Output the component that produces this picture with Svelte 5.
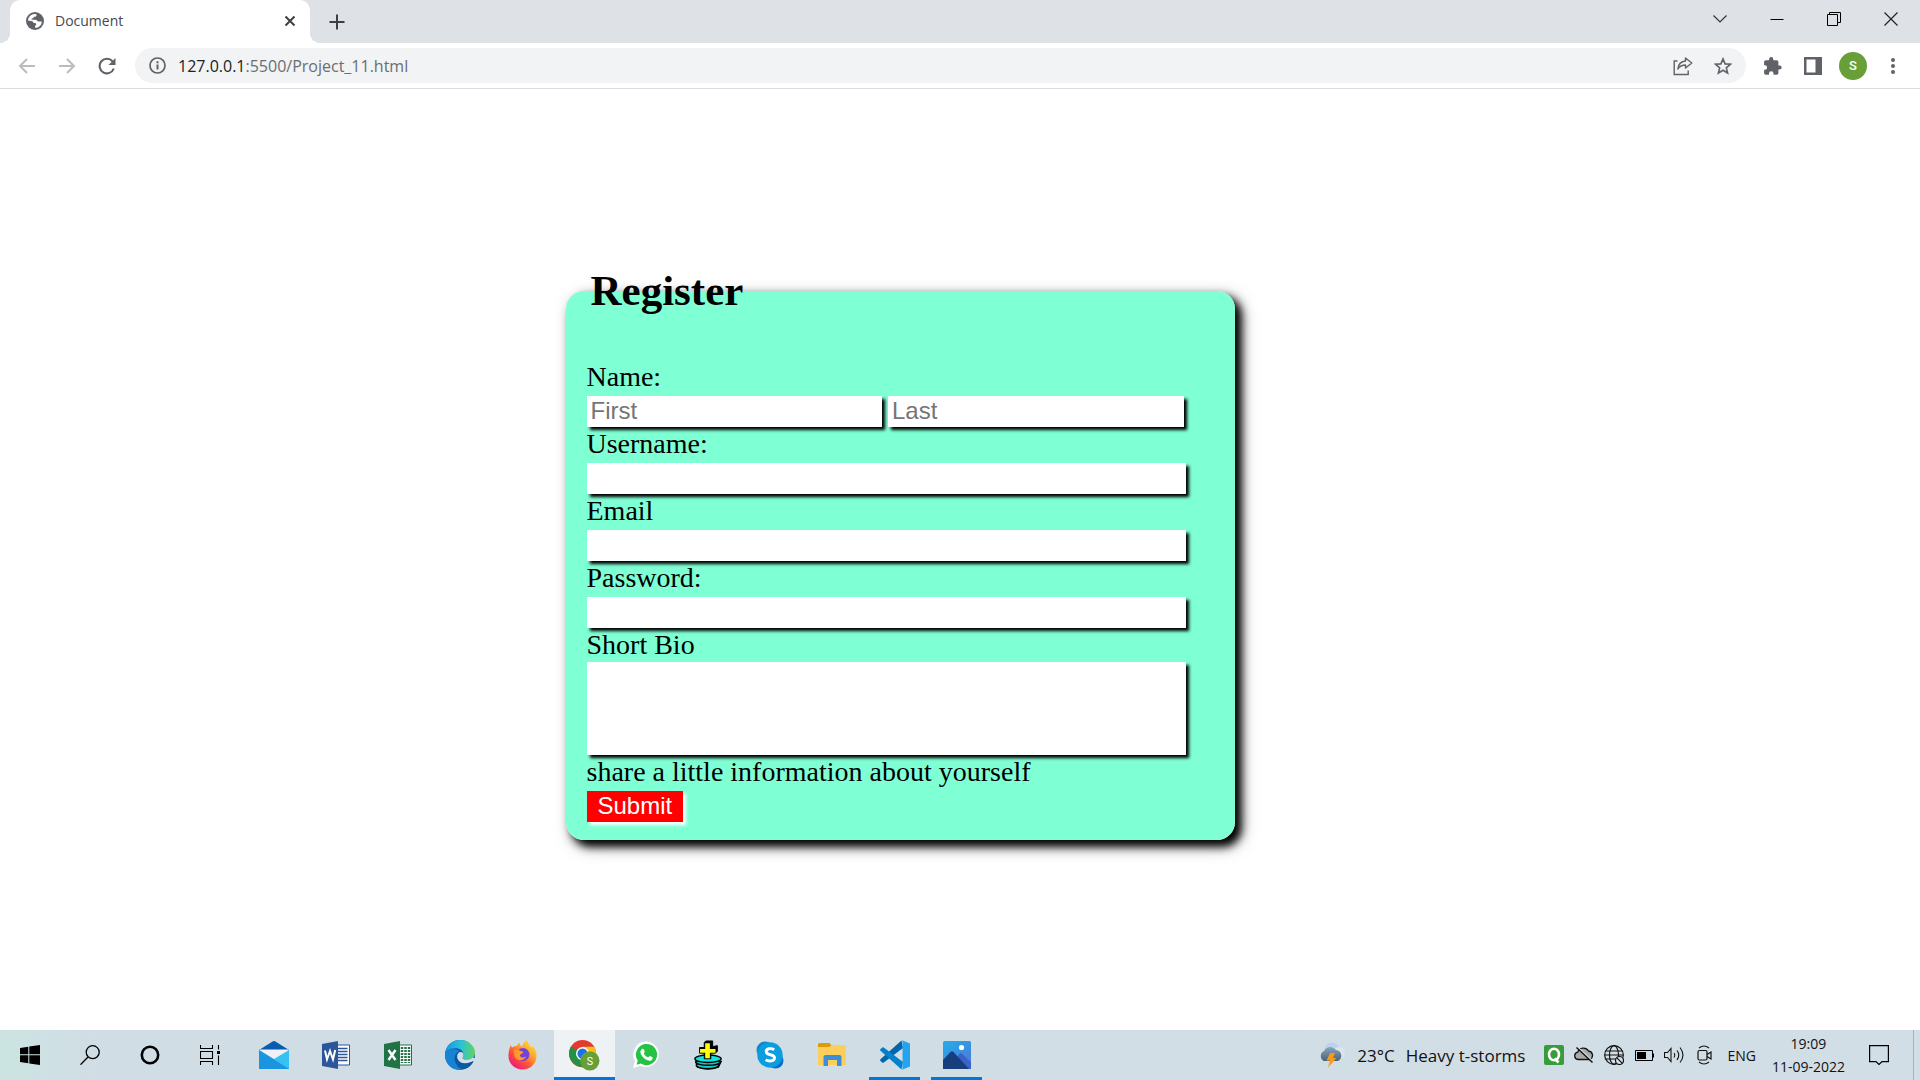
<script>
  let bio = $state('');
</script>

<div class="window">
  <header class="tabs">
    <span class="flare left"></span>
    <div class="tab">
      <svg width="18" height="18" viewBox="0 0 18 18"><circle cx="9" cy="9" r="9" fill="#5f6368"/><path d="M2 8.6C2.300 5 5 2.300 8.200 2c1.800-.1 2.400.5 2.400 1.200 0 1.300-1.200 1.400-2.500 1.600-.6.100-.5 1.200-1.100 1.500-.7.400-1.500.1-1.500.9 0 .7.800.6 1.700.6h2.600c1.100 0 1.300 1.700 2.600 1.700h3.400c0 2.900-2.200 5.800-5.200 6.300-1.200.2-1.800-.4-1.700-1.300.1-1 1.300-1.300 1.300-2.300 0-1.200-1-1-2.200-1.200-.9-.2-.8-1.500-1.900-1.700C4.800 9 3 9.300 2 8.600Z" fill="#fff"/></svg>
      <span class="title">Document</span>
      <button class="icon-btn small" aria-label="Close tab"><svg width="12" height="12" viewBox="0 0 12 12" stroke="#3c4043" stroke-width="2"><path d="M1.500 1.500l9 9M10.500 1.500l-9 9"/></svg></button>
    </div>
    <span class="flare right"></span>
    <button class="icon-btn new-tab" aria-label="New tab"><svg width="16" height="16" viewBox="0 0 16 16" stroke="#3c4043" stroke-width="2"><path d="M8 0.500v15M0.500 8h15"/></svg></button>
    <div class="controls">
      <button class="icon-btn" aria-label="Search tabs"><svg width="14" height="14" viewBox="0 0 14 14" fill="none" stroke="#333" stroke-width="1.200"><path d="M.5 3.500L7 10l6.500-6.500"/></svg></button>
      <button class="icon-btn" aria-label="Minimize"><svg width="14" height="14" viewBox="0 0 14 14" stroke="#000"><path d="M.5 7.500h13"/></svg></button>
      <button class="icon-btn" aria-label="Restore"><svg width="14" height="14" viewBox="0 0 14 14" fill="none" stroke="#000"><path d="M.5 2.500h10v11h-10zM2.500 2.500v-2h11v10h-3"/></svg></button>
      <button class="icon-btn" aria-label="Close window"><svg width="14" height="14" viewBox="0 0 14 14" stroke="#222" stroke-width="1.200"><path d="M.5.5l13 13M13.500.5l-13 13"/></svg></button>
    </div>
  </header>

  <nav class="toolbar">
    <button class="icon-btn" aria-label="Back"><svg width="18" height="18" viewBox="0 0 18 18" fill="none" stroke="#babcbe" stroke-width="2"><path d="M17 9H2.500M9 2L2 9l7 7"/></svg></button>
    <button class="icon-btn" aria-label="Forward"><svg width="18" height="18" viewBox="0 0 18 18" fill="none" stroke="#babcbe" stroke-width="2"><path d="M1 9h14.500M9 2l7 7-7 7"/></svg></button>
    <button class="icon-btn" aria-label="Reload"><svg width="18" height="18" viewBox="0 0 18 18"><path d="M15.800 11.500A7.300 7.300 0 1 1 14.600 4.400" fill="none" stroke="#5f6368" stroke-width="2.100"/><path d="M17.500 1v7h-7z" fill="#5f6368"/></svg></button>
    <div class="omnibox">
      <svg class="info" width="17" height="17" viewBox="0 0 17 17"><circle cx="8.500" cy="8.500" r="7.500" fill="none" stroke="#5f6368" stroke-width="1.700"/><path d="M8.500 7.500v5M8.500 4.300v2" stroke="#5f6368" stroke-width="2"/></svg>
      <div class="url" role="textbox" tabindex="0" aria-label="Address">127.0.0.1<span>:5500/Project_11.html</span></div>
      <button class="icon-btn" aria-label="Share"><svg width="20" height="20" viewBox="0 0 20 20" fill="none" stroke="#5f6368" stroke-width="1.400"><path d="M4.500 5H1.200v13.500h14V14.500"/><path d="M12.500 2l6.300 5-6.300 5V9C9 9 6.500 10.500 4.800 13 5.300 8.300 8 5.500 12.500 5z" stroke-linejoin="round"/></svg></button>
      <button class="icon-btn" aria-label="Bookmark"><svg width="18" height="18" viewBox="0 0 18 18" fill="none" stroke="#5f6368" stroke-width="1.600"><path d="M9 1.900l2.100 5 5.300.4-4.100 3.500 1.300 5.200L9 13.200 4.400 16l1.300-5.200-4.100-3.500 5.300-.4z"/></svg></button>
    </div>
    <button class="icon-btn" aria-label="Extensions"><svg width="18" height="18" viewBox="0 0 18 18" fill="#5f6368"><path d="M15.600 8.500h-1.200V5c0-.9-.7-1.700-1.700-1.700H9.300V2.200a2.100 2.100 0 0 0-4.200 0v1.100H1.800C.9 3.300.1 4.100.1 5v3.200h1.200a2.300 2.300 0 0 1 0 4.500H.1V16c0 .9.800 1.700 1.700 1.700H5v-1.200a2.200 2.200 0 0 1 4.500 0v1.200h3.200c1 0 1.700-.8 1.700-1.700v-3.400h1.200a2 2 0 0 0 0-4.100z"/></svg></button>
    <button class="icon-btn" aria-label="Side panel"><svg width="18" height="18" viewBox="0 0 18 18"><path d="M0 0h18v18H0z" fill="#5f6368"/><path d="M2.500 2.500h9v13h-9z" fill="#fff"/></svg></button>
    <button class="icon-btn" aria-label="Profile"><span class="avatar">S</span></button>
    <button class="icon-btn" aria-label="Menu"><svg width="6" height="18" viewBox="0 0 6 18" fill="#5f6368"><circle cx="3" cy="3" r="2"/><circle cx="3" cy="9" r="2"/><circle cx="3" cy="15" r="2"/></svg></button>
  </nav>

  <main>
    <form onsubmit={(e) => e.preventDefault()}>
      <fieldset>
        <legend>Register</legend>
        <label for="first">Name:</label>
        <div class="names">
          <input id="first" placeholder="First" />
          <input placeholder="Last" aria-label="Last name" />
        </div>
        <label for="username">Username:</label>
        <input id="username" />
        <label for="email">Email</label>
        <input id="email" type="email" />
        <label for="password">Password:</label>
        <input id="password" type="password" />
        <label class="tight" for="bio">Short Bio</label>
        <textarea id="bio" aria-describedby="hint" bind:value={bio}></textarea>
        <p id="hint">share a little information about yourself</p>
        <button class="submit">Submit</button>
      </fieldset>
    </form>
  </main>

  <footer class="taskbar">
    <div class="system">
      <button class="task" aria-label="Start"><svg width="20" height="20" viewBox="0 0 20 20"><path d="M0 3l8.300-1.200V9.300H0zM9.300 1.600L20 0v9.300H9.300zM0 10.300h8.300v7.900L0 17zM9.300 10.300H20V20L9.300 18.400z"/></svg></button>
      <button class="task" aria-label="Search"><svg width="20" height="20" viewBox="0 0 20 20" fill="none" stroke="#000" stroke-width="1.300"><circle cx="12.700" cy="7.200" r="6.500"/><path d="M8 12L.5 19.700"/></svg></button>
      <button class="task" aria-label="Cortana"><svg width="20" height="20" viewBox="0 0 20 20" fill="none" stroke="#000" stroke-width="2.600"><circle cx="10" cy="10" r="8.200"/></svg></button>
      <button class="task" aria-label="Task view"><svg width="20" height="20" viewBox="0 0 20 20" fill="none" stroke="#000" stroke-width="1.100"><path d="M.5 0v3.500h12V0M.5 6.500h12v7H.5zM.5 20v-3.500h12V20M18.500 0v4.500M18.500 10.500V20"/><path d="M17 6h3v3h-3z" fill="#000" stroke="none"/></svg></button>
    </div>
    <div class="apps">
      <button class="task" aria-label="Mail"><svg width="30" height="30" viewBox="0 0 30 30"><path d="M0 10L14 1.300q1-.6 2 0L30 10z" fill="#0b5cb0"/><path d="M1 9.500h28v12H1z" fill="#eef2f6"/><path d="M0 10l15 9 15-9v19H0z" fill="#35c1f1"/><path d="M0 10l30 19H0z" fill="#1c94e0"/></svg></button>
      <button class="task" aria-label="Word"><svg width="28" height="28" viewBox="0 0 28 28"><path d="M15 4h12.500v20H15z" fill="#fff" stroke="#2b579a"/><path d="M16 7.500h9.500M16 10.500h9.500M16 13.500h9.500M16 16.500h9.500M16 19.500h9.500" stroke="#2b579a" stroke-width="1.400"/><path d="M0 3l16-3v28L0 25z" fill="#2b579a"/><path d="M3 9.500l2 9L8 10l3 8.500 2.200-9.500" fill="none" stroke="#fff" stroke-width="2"/></svg></button>
      <button class="task" aria-label="Excel"><svg width="28" height="28" viewBox="0 0 28 28"><path d="M15 4h12.500v20H15z" fill="#fff" stroke="#217346"/><path d="M18 6v16M21.500 6v16M25 6v16" stroke="#217346" stroke-width="2.500" stroke-dasharray="2 1"/><path d="M0 3l16-3v28L0 25z" fill="#217346"/><path d="M4.500 9l7 10M11.500 9l-7 10" stroke="#fff" stroke-width="2.400"/></svg></button>
      <button class="task" aria-label="Edge"><svg width="30" height="30" viewBox="0 0 30 30"><defs><linearGradient id="ea"><stop stop-color="#1696df"/><stop offset=".55" stop-color="#2fc2d6"/><stop offset="1" stop-color="#62d45b"/></linearGradient></defs><circle cx="15" cy="15" r="15" fill="#0c59a4"/><path d="M0 14C.5 5.500 7 0 15 0c9 0 15 6.500 15 12.500 0 5-3.500 7.500-8 7.500-3 0-5-1.300-4.700-2.200.2-.6 1.200-1.200 1.200-3.300C18.500 11 15 8.300 10.500 8.300 4.500 8.300.500 11.500 0 14z" fill="url(#ea)"/><path d="M0 15c0-3 4-6 8.500-6 2.500 0 4.500.8 6 2-3 1-5 4.500-5 7.500 0 5 4 9 8.500 10.800C8 32 0 24.500 0 15z" fill="#1683d4"/><path d="M14.800 12c-2 1-3.300 3.500-2.300 7 1.500 4.500 7.500 6 15.500 2.300 1 0 1 .5.600 1.200L31 24V19l-3-1.500c-3 2.800-9 3.300-10.700.5.500-.800 1.200-1.500 1.200-3.500 0-1.300-1.500-3-3.700-2.500z" fill="#d3dfe7"/><path d="M12.400 18.500c1.500 5 8 6.800 15.600 2.800-3 6.500-9 8.700-14 6.500-3-2-3-6-1.600-9.300z" fill="#0c59a4"/></svg></button>
      <button class="task" aria-label="Firefox"><svg width="29" height="30" viewBox="0 0 29 30"><defs><linearGradient id="fa" x1="1" y1="0" x2=".2" y2="1"><stop stop-color="#fff04a"/><stop offset=".4" stop-color="#ffa62c"/><stop offset=".7" stop-color="#ff4a40"/><stop offset="1" stop-color="#e31587"/></linearGradient></defs><path d="M3 4.500c0 2 .5 2.500 1 3C6 6 7.500 6 8.500 6c1-2 2.500-3 3.500-3.200-.5 1.500 0 3 2 3.500 1-2.500 2.500-5.500 5.500-6.300-.3 3 2.500 4.500 4 7.500l1-1.500C27.500 9 29 12.500 28.500 17 28 24 22 29.500 14.500 29.500S.5 24 .5 16C.5 12 1.500 7.500 3 4.500z" fill="url(#fa)"/><circle cx="15" cy="14.500" r="6.500" fill="#7342dc"/><path d="M6.500 9.500c2 0 3.500-.5 6 1.500 1.500.2 3 .5 2.500 1.800-.6 1.200-3 1-3 2.700 0 2 3.500 3 6 1-1 4-8 5.500-11 1-1.500-2.500-1-6-.5-8z" fill="#ff9a28"/></svg></button>
      <button class="task active" aria-label="Chrome"><svg width="31" height="31" viewBox="0 0 32 32"><circle cx="14" cy="14" r="14" fill="#e33b2e"/><path d="M14 14L1.900 7A14 14 0 0 0 14 28l7-12z" fill="#229342"/><path d="M14 7h12.100A14 14 0 0 1 14 28l6-10z" fill="#fbc116"/><circle cx="14" cy="14" r="6.800" fill="#fff"/><circle cx="14" cy="14" r="5.300" fill="#1a73e8"/><circle cx="21.500" cy="21.500" r="10" fill="#689f38"/><text x="21.500" y="25.500" text-anchor="middle" font-family="Roboto" font-size="11" fill="#fff">S</text></svg></button>
      <button class="task" aria-label="WhatsApp"><svg width="28" height="28" viewBox="0 0 28 28"><path d="M14.500.5a12.800 12.800 0 1 1-6.300 24.200L1 27l2-7A13 13 0 0 1 14.500.500z" fill="#fff"/><path d="M14.500 3a10.600 10.600 0 1 1-5.700 19.500l-4.300 1.300 1.300-4.200A10.600 10.600 0 0 1 14.500 3z" fill="#25c243"/><path d="M10 8c.6-.5 1.500-.4 1.800.3l.9 2.200c.2.500-.3 1.200-1 1.900 1 2 2.500 3.200 4.600 4.100.6-.6 1.100-1.600 1.800-1.400l2.300 1.200c.8.500 0 2.300-.8 2.900-1.500 1.100-4 .4-6.200-.9-2.200-1.400-4.300-3.800-4.900-6.200C8.100 10.400 8.900 8.900 10 8z" fill="#fff"/></svg></button>
      <button class="task" aria-label="Disk tool"><svg width="30" height="30" viewBox="0 0 30 32"><g stroke="#000" stroke-width="1.500"><path d="M2 23l2 6q11 4 22 0l3-6z" fill="#087c7c"/><ellipse cx="14.500" cy="27" rx="12" ry="3.500" fill="#16c5c5"/><ellipse cx="15" cy="23.500" rx="13" ry="3.500" fill="#16c5c5"/><ellipse cx="15" cy="20" rx="14" ry="4" fill="#16e0e0"/><path d="M11 2.500L13 1h7v6l5-1v6l-2 2h-5v6h-7v-6H6V8h5z" fill="#000" stroke-width="1"/></g><path d="M12 3.500h5v6h6v4h-6v6h-5v-6H6.500v-4H12z" fill="#ff0"/></svg></button>
      <button class="task" aria-label="Skype"><svg width="28" height="28" viewBox="0 0 28 28"><circle cx="9" cy="9" r="8.500" fill="#0a8bd0"/><circle cx="19.500" cy="19.500" r="8" fill="#0a6fc9"/><circle cx="14" cy="14" r="12.700" fill="#0c9de0"/><path d="M18.200 8.700c-3-1.800-8-1.200-8 1.800 0 4.500 8.300 2 8.300 6.300 0 3.500-5.500 4-8.900 2" fill="none" stroke="#fff" stroke-width="2.900"/></svg></button>
      <button class="task" aria-label="File Explorer"><svg width="28" height="28" viewBox="0 0 28 28"><path d="M0 3.500Q0 2 1.500 2h10L14 5v4H0z" fill="#df9a0b"/><path d="M0 6h11l3-2h12.500Q28 4 28 5.500V24H0z" fill="#fccf5c"/><path d="M5.500 25V16q0-2 2-2h14q2 0 2 2v9H19v-6h-9v6z" fill="#3b8fd6"/></svg></button>
      <button class="task running" aria-label="Visual Studio Code"><svg width="30" height="30" viewBox="0 0 30 30"><path d="M21.500.5L23 8 3.800 22.500q-.8.600-1.600 0L.500 21q-.9-.9 0-1.800z" fill="#0065a9"/><path d="M21.500 29.500L23 22 3.800 7.500q-.8-.600-1.600 0L.500 9q-.9.900 0 1.800z" fill="#0780cc"/><path d="M21.500 0L30 3.500v23L21.500 30q1 0 1-2V2q0-2-1-2z" fill="#24a3ef"/></svg></button>
      <button class="task running" aria-label="Photos"><svg width="28" height="28" viewBox="0 0 28 28"><defs><linearGradient id="pa" x2=".7" y2="1"><stop stop-color="#21aeea"/><stop offset="1" stop-color="#4f78d8"/></linearGradient></defs><rect width="28" height="28" rx="1.500" fill="url(#pa)"/><path d="M13 17l4-4.500q1-1 2 0l9 9V28H13z" fill="#3a62c8"/><path d="M0 19l7.500-8q1.500-1.300 3 0L26 28H0z" fill="#173e7c"/><circle cx="18.500" cy="6.500" r="2.600" fill="#fff"/></svg></button>
    </div>

    <button class="weather">
      <svg width="28" height="26" viewBox="0 0 28 26"><defs><linearGradient id="wa" x2="0" y2="1"><stop stop-color="#8ea4b5"/><stop offset="1" stop-color="#48637a"/></linearGradient></defs><circle cx="14" cy="8" r="7.500" fill="#b8d2f2"/><circle cx="21" cy="11" r="6" fill="#dbe5ef"/><path d="M6 19a5.500 5.500 0 0 1 0-10 7 7 0 0 1 12-1 5.800 5.800 0 0 1 2 11z" fill="url(#wa)"/><path d="M12 11h5l-2 5h3.500L10 25.500l2-7H8.500z" fill="#f8981d"/></svg>
      <span>23°C</span><span>Heavy t-storms</span>
    </button>
    <div class="tray">
      <svg width="20" height="20" viewBox="0 0 20 20"><rect width="20" height="20" rx="2" fill="#389b3c"/><ellipse cx="10" cy="9.500" rx="5" ry="5.700" fill="none" stroke="#fff" stroke-width="2.600"/><path d="M10.500 13.500l4 4" stroke="#fff" stroke-width="2.600"/></svg>
      <svg width="20" height="20" viewBox="0 0 20 20"><path d="M4 14.500a3.700 3.700 0 0 1-.3-7.300A6 6 0 0 1 14.500 6a4.500 4.500 0 0 1 1.500 8.500z" fill="#aaa" stroke="#111" stroke-width="1.300"/><path d="M4 2.500L19 16.500" stroke="#d3dfe7" stroke-width="1.600"/><path d="M2.500 2.500L18.500 17.500" stroke="#111" stroke-width="1.400"/></svg>
      <svg width="20" height="20" viewBox="0 0 20 20" fill="none" stroke="#111" stroke-width="1.200"><circle cx="10" cy="10" r="9.300"/><ellipse cx="10" cy="10" rx="4.500" ry="9.300"/><path d="M2 6h16M.7 10h18.600M2 14h16"/><circle cx="15.500" cy="15.500" r="4" fill="#d3dfe7"/><path d="M12.700 12.700l5.600 5.600"/></svg>
      <svg width="20" height="20" viewBox="0 0 20 20"><path d="M1.500 5.500h17v10h-17z" fill="none" stroke="#000"/><path d="M3 7h9v7H3zM19 8.500h1v4h-1z"/></svg>
      <svg width="20" height="20" viewBox="0 0 20 20" fill="none" stroke="#111" stroke-width="1.100"><path d="M.5 7.500h3L7 3.500v13l-3.500-4h-3zM10 8q1.500 2 0 4.500M13 5.500q3.500 4.500 0 9.500M16 2.500q6 7.500 0 15"/></svg>
      <svg width="20" height="20" viewBox="0 0 20 20" fill="none" stroke="#111" stroke-width="1.200"><rect x="4" y="5.500" width="9" height="9.500" rx="1.500"/><path d="M13 9.500l4-2.500v7l-4-2.500M5 3q5-4 10 0M5 17q5 4 10 0"/></svg>
      <span class="lang">ENG</span>
    </div>
    <div class="clock"><time>19:09</time><time>11-09-2022</time></div>
    <button class="task notes" aria-label="Notifications"><svg width="20" height="20" viewBox="0 0 20 20" fill="none" stroke="#000" stroke-width="1.200"><path d="M.6.600h18.800v16H13L10 19.500 7 16.600H.600z"/></svg></button>
    <span class="peek"></span>
  </footer>
</div>

<style>
  :global(body) { margin: 0; }
  .window { min-height: 100vh; display: flex; flex-direction: column; background: #fff; font-family: "Open Sans", sans-serif; }
  button { border: 0; padding: 0; background: none; font: inherit; color: inherit; }
  svg { display: block; flex: none; }
  .tabs { display: flex; height: 43px; padding-right: 1px; background: #dee1e6; }
  .tab { display: flex; align-items: center; gap: 11px; width: 300px; box-sizing: border-box; padding: 0 10px 2px 16px; background: #fff; border-radius: 10px 10px 0 0; font-size: 14px; color: #45494d; }
  .title { flex: 1; }
  .flare { width: 10px; height: 10px; align-self: flex-end; }
  .left { background: radial-gradient(circle at 0 0, #dee1e6 10px, #fff 10px); }
  .right { background: radial-gradient(circle at 100% 0, #dee1e6 10px, #fff 10px); }
  .icon-btn { display: flex; align-items: center; justify-content: center; width: 40px; flex: none; }
  .small { width: 20px; }
  .new-tab { width: 34px; }
  .controls { display: flex; margin-left: auto; padding-bottom: 6px; }
  .controls .icon-btn { width: 57px; }
  .toolbar { display: flex; align-items: center; height: 45px; padding: 0 7px; border-bottom: 1px solid #d9dbde; }
  .omnibox { flex: 1; display: flex; align-items: center; height: 35px; margin: 0 7px 0 8px; padding: 0 3px 0 14px; border-radius: 18px; background: #f1f3f4; font-size: 16px; color: #202124; }
  .url { flex: 1; margin-left: 12px; }
  .url span { color: #6a6e72; }
  .avatar { width: 28px; height: 28px; border-radius: 50%; background: #689f38; color: #fff; font: 500 13px/28px Roboto, sans-serif; }

  main { flex: 1; display: flex; justify-content: center; padding: 177px 120px 0 0; font: 28px/34px "Liberation Serif", serif; color: #000; }
  form { width: 669px; }
  fieldset { min-width: 0; margin: 0; padding: 44px 49px 18px 21px; border: 0; border-radius: 18px; background: aquamarine; box-shadow: 6px 6px 8px #000, 6px 6px 16px #0008; }
  legend { padding: 0 4px; font-size: 43px; font-weight: bold; line-height: 50px; }
  label, p { display: block; margin: 0 0 2px; }
  .tight { margin: 0; }
  input, textarea, .submit { box-sizing: border-box; height: 31px; border: 0; border-radius: 0; font: 24px/28px "Liberation Sans", sans-serif; }
  input, textarea { display: block; width: 100%; padding: 0 4px 2px; background: #fff; box-shadow: 3px 3px 3px #000; }
  input::placeholder { color: #757575; }
  .names { display: flex; gap: 6px; padding-right: 2px; }
  textarea { height: 93px; resize: none; }
  .submit { display: block; padding: 0 11px 2px; background: #f00; color: #fff; box-shadow: 3px 3px 3px #fff; }

  .taskbar { display: flex; height: 50px; background: linear-gradient(90deg, #cbe4e1, #d1dde5 100px, #d2dee6); font-size: 17px; color: #111; }
  .system, .apps { display: flex; }
  .apps { margin-left: 3px; }
  .task { display: flex; align-items: center; justify-content: center; box-sizing: border-box; height: 50px; }
  .system .task { width: 60px; }
  .apps .task { width: 62px; }
  .apps .active { width: 61px; margin-left: 1px; background: #eef2f5; box-shadow: inset 0 -3px #0078d7; }
  .apps .running { width: 51px; margin: 0 5px 0 6px; box-shadow: inset 0 -3px #0078d7; }
  .weather { display: flex; align-items: center; gap: 11px; margin-left: auto; }
  .tray { display: flex; align-items: center; gap: 10px; margin-left: 19px; }
  .lang { margin-left: 3px; font-size: 14px; }
  .clock { display: flex; flex-direction: column; justify-content: center; align-items: center; margin-left: 16px; font-size: 14px; line-height: 23px; }
  .notes { width: 68px; }
  .peek { width: 6px; border-left: 1px solid #a3b3bf; }
</style>
